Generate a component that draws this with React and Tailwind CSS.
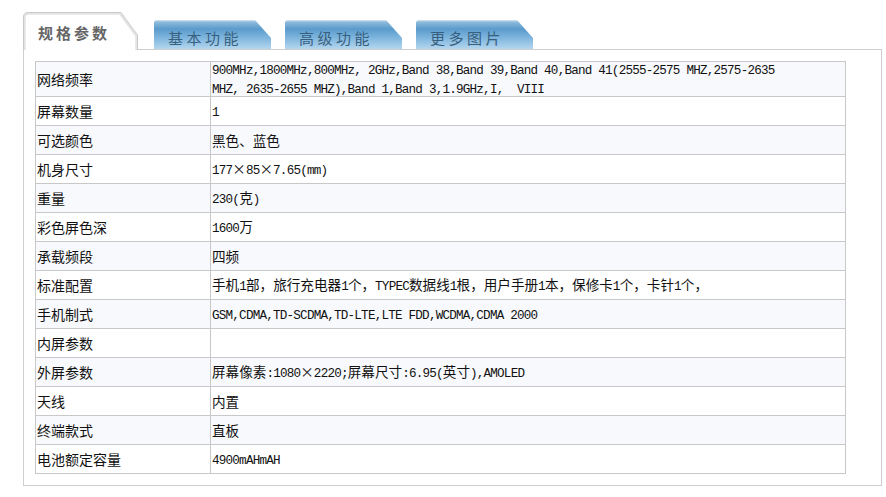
import React from 'react'

const ROWS = [
  ['网络频率', ['900MHz,1800MHz,800MHz, 2GHz,Band 38,Band 39,Band 40,Band 41(2555-2575 MHZ,2575-2635', 'MHZ, 2635-2655 MHZ),Band 1,Band 3,1.9GHz,I,  VIII']],
  ['屏幕数量', '1'],
  ['可选颜色', '黑色、蓝色'],
  ['机身尺寸', '177×85×7.65(mm)'],
  ['重量', '230(克)'],
  ['彩色屏色深', '1600万'],
  ['承载频段', '四频'],
  ['标准配置', '手机1部，旅行充电器1个，TYPEC数据线1根，用户手册1本，保修卡1个，卡针1个，'],
  ['手机制式', 'GSM,CDMA,TD-SCDMA,TD-LTE,LTE FDD,WCDMA,CDMA 2000'],
  ['内屏参数', ''],
  ['外屏参数', '屏幕像素:1080×2220;屏幕尺寸:6.95(英寸),AMOLED'],
  ['天线', '内置'],
  ['终端款式', '直板'],
  ['电池额定容量', '4900mAHmAH']
]

const TABS = ['基本功能', '高级功能', '更多图片']

// ascii runs in a narrow mono face, chinese in the cjk face
const Rich = ({ text }) => (
  <>
    {text.split(/([\x20-\x7e]+|×)/).filter(Boolean).map((part, i) => {
      if (part === '×') {
        return <span key={i} className="inline-block w-[13.6px] text-center font-['Noto_Sans_CJK_SC',sans-serif] text-[13.6px]">×</span>
      }
      if (/^[\x20-\x7e]+$/.test(part)) {
        return <span key={i} className="font-['Liberation_Mono',monospace] text-[12.6px] tracking-[-0.78px] whitespace-pre">{part}</span>
      }
      return <span key={i} className="font-['Noto_Sans_CJK_SC',sans-serif] text-[13.6px]">{part}</span>
    })}
  </>
)

const App = () => {
  return (
    <div className="w-[886px] h-[497px] bg-white pt-[12px] pl-[23px] font-['Noto_Sans_CJK_SC',sans-serif] text-[#111]">
      {/* Tabs */}
      <div className="flex w-[859px] h-[38px]">
        <div className="relative w-[115px] h-[38px] shrink-0">
          <svg className="absolute inset-0" width="115" height="38" viewBox="0 0 115 38">
            <path d="M1.5 38 V6 Q1.5 1.5 6 1.5 H97 L113.5 24 V38" fill="white" stroke="#e4e4e4" strokeWidth="2.5" />
            <path d="M0.5 38 V5 Q0.5 0.5 5 0.5 H98 L114.5 23 V38" fill="none" stroke="#c9c9c9" strokeWidth="1" />
          </svg>
          <div className="relative pl-[15px] pt-[10px] leading-[22px] text-[15px] tracking-[3px] font-bold text-[#666]">
            规格参数
          </div>
        </div>
        <div className="flex-1 flex items-end gap-[14px] pl-[16px] border-b border-[#cfcfcf]">
          {TABS.map((t) => (
            <div
              key={t}
              className="w-[117px] h-[29px] rounded-tl-[3px] pl-[14px] pt-[8px] leading-[20px] text-[15px] tracking-[3.5px] text-[#37607f] bg-[linear-gradient(180deg,#dde6ee_0px,#8dbbdc_2px,#5a9bcc_9px,#7fb6de_18px,#b4d6ee_100%)] [clip-path:polygon(0_0,101px_0,117px_18px,117px_100%,0_100%)]"
            >
              {t}
            </div>
          ))}
        </div>
      </div>

      {/* Panel */}
      <div className="w-[859px] h-[436px] border-l border-r border-b border-[#cfcfcf] pt-[11px] pl-[11px] pr-[35px]">
        <div className="w-[811px] border border-[#c8c8c8]">
          {ROWS.map(([label, value], i) => (
            <div
              key={label}
              className={`flex ${i === 0 ? 'h-[34px]' : 'h-[29px] border-t border-[#c8c8c8]'} ${i % 2 === 0 ? 'bg-[#f8f9fc]' : 'bg-white'}`}
            >
              <div className="w-[175px] shrink-0 border-r border-[#c8c8c8] flex items-center pl-[1px] text-[14px]">
                {label}
              </div>
              <div className="flex-1 flex flex-col justify-center pl-[1px] leading-[15px]">
                {Array.isArray(value)
                  ? value.map((line) => <div key={line}><Rich text={line} /></div>)
                  : <div><Rich text={value} /></div>}
              </div>
            </div>
          ))}
        </div>
      </div>
    </div>
  )
}

export default App
